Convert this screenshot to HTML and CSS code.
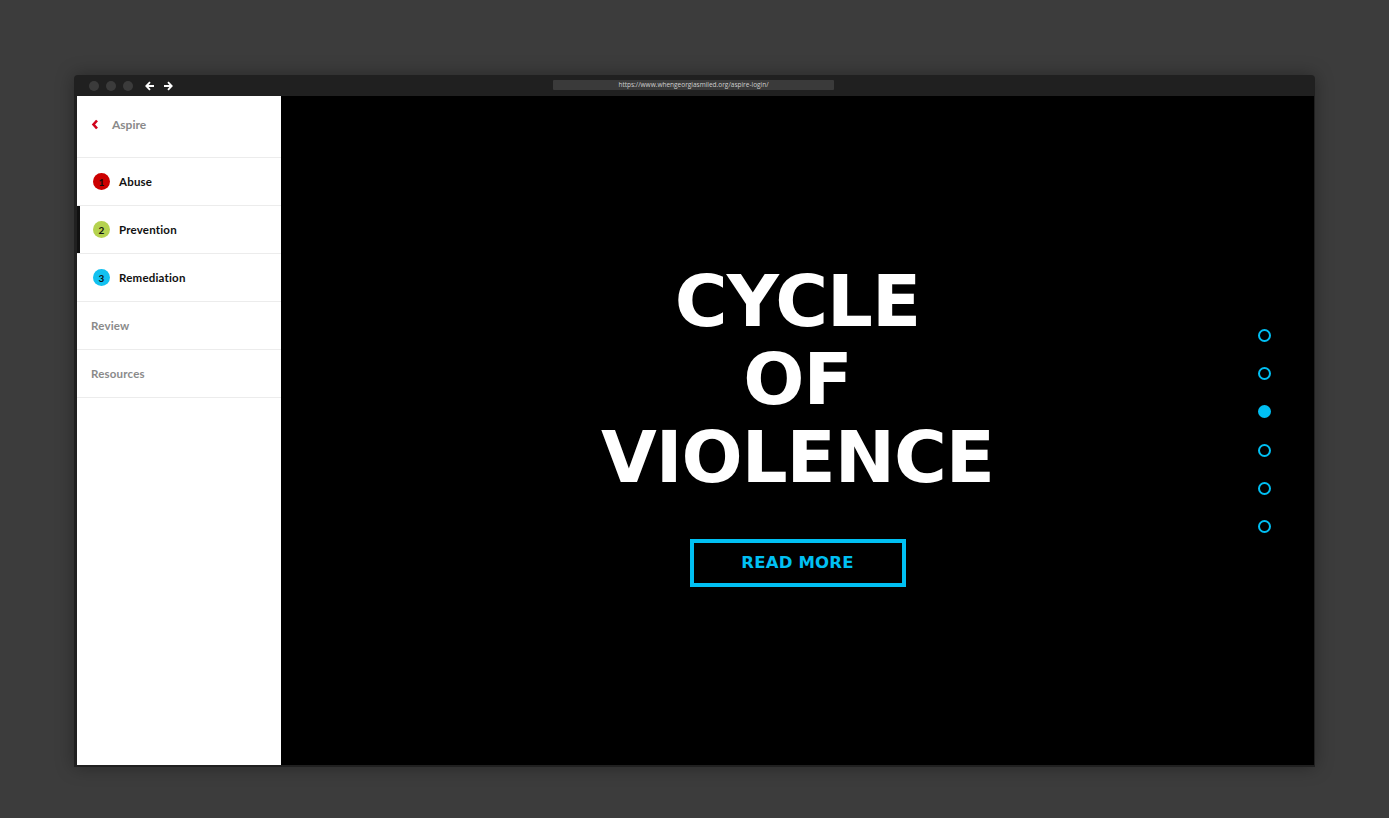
FILE: index.html
```html
<!DOCTYPE html>
<html>
<head>
<meta charset="utf-8">
<link rel="stylesheet" href="styles.css">
</head>
<body>
<div class="window">
  <div class="titlebar">
    <div class="lights"><span class="light"></span><span class="light"></span><span class="light"></span></div>
    <div class="navs">
      <svg width="10" height="10" viewBox="0 0 10 10"><path d="M9 5H1.5M5 1.2L1.3 5 5 8.8" fill="none" stroke="#fff" stroke-width="1.8"/></svg>
      <svg width="10" height="10" viewBox="0 0 10 10"><path d="M1 5h7.5M5 1.2L8.7 5 5 8.8" fill="none" stroke="#fff" stroke-width="1.8"/></svg>
    </div>
    <div class="url">https://www.whengeorgiasmiled.org/aspire-login/</div>
  </div>
  <div class="content">
    <aside class="sidebar">
      <div class="side-head">
        <svg class="chev" width="8" height="11" viewBox="0 0 8 11"><path d="M6 1.5L2.5 5.5 6 9.5" fill="none" stroke="#d0021b" stroke-width="2.6"/></svg>
        <span>Aspire</span>
      </div>
      <div class="item"><span class="num red">1</span><span class="label">Abuse</span></div>
      <div class="item active"><span class="num green">2</span><span class="label">Prevention</span></div>
      <div class="item"><span class="num blue">3</span><span class="label">Remediation</span></div>
      <div class="item plain"><span class="label">Review</span></div>
      <div class="item plain"><span class="label">Resources</span></div>
    </aside>
    <main class="main">
      <h1 class="headline">CYCLE<br>OF<br>VIOLENCE</h1>
      <div class="btn">READ MORE</div>
      <div class="dots">
        <span class="dot"></span><span class="dot"></span><span class="dot on"></span><span class="dot"></span><span class="dot"></span><span class="dot"></span>
      </div>
    </main>
  </div>
</div>
</body>
</html>
```

FILE: styles.css
```css
html, body { margin: 0; padding: 0; }
body {
  background: #3c3c3c;
  width: 1389px;
  height: 818px;
  overflow: hidden;
  font-family: "Lato", "DejaVu Sans", sans-serif;
}
.window {
  margin: 75px 0 0 74px;
  width: 1241px;
  height: 692px;
  background: #202020;
  border-radius: 4px 4px 0 0;
  padding: 0 1px 2px 3px;
  box-sizing: border-box;
  display: flex;
  flex-direction: column;
  box-shadow: 0 0 18px rgba(0,0,0,0.35);
}
.titlebar {
  height: 21px;
  display: flex;
  align-items: center;
  position: relative;
  flex: none;
}
.lights { display: flex; gap: 7px; margin-left: 12px; }
.light { width: 10px; height: 10px; border-radius: 50%; background: #3b3b3b; }
.navs { display: flex; gap: 8px; margin-left: 12px; }
.navs svg { display: block; }
.url {
  position: absolute;
  left: 476px;
  top: 5px;
  width: 281px;
  height: 10px;
  background: #3a3a3a;
  border-radius: 1px;
  color: #cfcfcf;
  font-family: "Open Sans", sans-serif;
  font-size: 6.5px;
  line-height: 10px;
  text-align: center;
}
.content { flex: 1; display: flex; min-height: 0; }
.sidebar {
  width: 204px;
  background: #fff;
  flex: none;
}
.side-head {
  height: 57px;
  padding-bottom: 4px;
  border-bottom: 1px solid #ececec;
  display: flex;
  align-items: center;
  padding-left: 14px;
  color: #8a8a8a;
  font-weight: 700;
  font-size: 12px;
}
.side-head .chev { margin-right: 13px; margin-top: 0; }
.item {
  height: 47px;
  border-bottom: 1px solid #ececec;
  display: flex;
  align-items: center;
  padding-left: 16px;
  font-weight: 700;
  font-size: 11.5px;
  color: #111;
  letter-spacing: 0.2px;
}
.item.active { box-shadow: inset 3px 0 0 #111; }
.item.plain { color: #8a8a8a; padding-left: 14px; }
.num {
  width: 17px;
  height: 17px;
  border-radius: 50%;
  display: flex;
  align-items: center;
  justify-content: center;
  font-size: 10px;
  font-weight: 700;
  margin-right: 9px;
  color: #111;
}
.num.red { background: #cc0000; color: #111; }
.num.green { background: #b5d24f; }
.num.blue { background: #12c1f0; }
.main {
  flex: 1;
  background: #000;
  position: relative;
  display: flex;
  flex-direction: column;
  align-items: center;
  justify-content: center;
  padding-bottom: 13px;
}
.headline {
  margin: 0;
  color: #fff;
  font-family: "DejaVu Sans", sans-serif;
  font-weight: 700;
  font-size: 72px;
  line-height: 78px;
  text-align: center;
  letter-spacing: -1px;
}
.btn {
  margin-top: 43px;
  width: 208px;
  height: 40px;
  border: 4px solid #00c0f3;
  color: #00c0f3;
  font-family: "DejaVu Sans", sans-serif;
  font-weight: 700;
  font-size: 16.5px;
  display: flex;
  align-items: center;
  justify-content: center;
  letter-spacing: 0.2px;
}
.dots {
  position: absolute;
  right: 43px;
  top: 233px;
  display: flex;
  flex-direction: column;
  gap: 25.2px;
}
.dot {
  width: 9px;
  height: 9px;
  border: 2px solid #00bff3;
  border-radius: 50%;
}
.dot.on { background: #00bff3; }
```
